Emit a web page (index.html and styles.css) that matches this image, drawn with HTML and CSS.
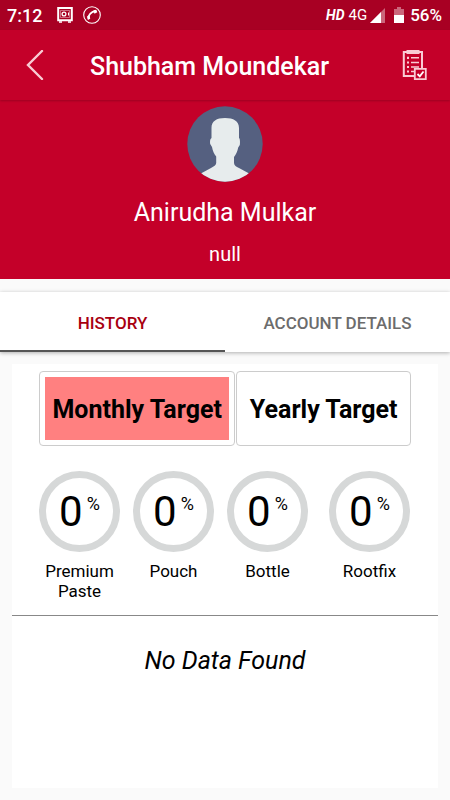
FILE: index.html
```html
<!DOCTYPE html>
<html lang="en">
<head>
<meta charset="utf-8">
<meta name="viewport" content="width=device-width, initial-scale=1">
<title>Shubham Moundekar</title>
<link rel="stylesheet" href="styles.css">
</head>
<body>
<div class="screen">
  <div class="status">
    <span class="clock">7:12</span>
    <svg class="status-safe" width="16" height="16" viewBox="0 0 16 16" fill="none" stroke="#fff">
      <path d="M1.200 1h13.600v12.200H1.200z" stroke-width="2"/>
      <path d="M3.500 3.500h9v7h-9z" stroke-width=".6" opacity=".7"/>
      <circle cx="7" cy="7" r="1.900" stroke-width="1.300"/>
      <path d="M11.500 5.500v3" stroke-width="1"/>
      <path d="M2 15h3M11 15h3" stroke-width="1.600"/>
    </svg>
    <svg class="status-call" width="18" height="18" viewBox="0 0 18 18">
      <circle cx="9" cy="9" r="8.300" fill="none" stroke="#fff" stroke-width="1.100"/>
      <path d="M5.500 12.500C5 9 8.500 5.300 12.500 5.400" fill="none" stroke="#fff" stroke-width="1.800"/>
      <path d="M10.300 4.200l3-.4 1 2.500-2.800 1.400zM4 10.300l2.700-.3.500 2.800-2.300 1.200z" fill="#fff"/>
    </svg>
    <span class="hd">HD</span>
    <span class="network">4G</span>
    <svg class="signal" width="15" height="15" viewBox="0 0 15 15">
      <path d="M0 15L15 0v15z" fill="#fff" opacity=".4"/>
      <path d="M0 15L11 4v11z" fill="#fff"/>
    </svg>
    <svg class="battery" width="10" height="16" viewBox="0 0 10 16">
      <path d="M3 0h4v2h3v6H0V2h3z" fill="#fff" opacity=".4"/>
      <path d="M0 8h10v8H0z" fill="#fff"/>
    </svg>
    <span class="percent">56%</span>
  </div>
  <header class="appbar">
    <button class="icon-button" type="button" aria-label="Back">
      <svg width="18" height="30" viewBox="0 0 18 30" fill="none" stroke="#f9cbd4" stroke-width="2.400" stroke-linecap="round"><path d="M16 1L2 15l14 14"/></svg>
    </button>
    <h1 class="title">Shubham Moundekar</h1>
    <button class="icon-button" type="button" aria-label="Orders">
      <svg width="25" height="30" viewBox="0 0 25 30" fill="none" stroke="#f9cbd4">
        <path d="M12 26H1.800V2H20v16" stroke-width="2"/>
        <path d="M4.500 2h13" stroke-width="4"/>
        <path d="M9 7.800h8M9 12.500h8M9 17h8M9 21.500h3" stroke-width="1.400"/>
        <path d="M5 7.800h2M5 12.500h2M5 17h2M5 21.500h2" stroke-width="2.200"/>
        <path d="M12.800 18.800h11v10.400h-11z" fill="#c40029" stroke-width="1.800"/>
        <path d="M15.500 24l2.300 2.300 3.700-4.800" stroke="#fff" stroke-width="1.800"/>
      </svg>
    </button>
  </header>
  <section class="profile">
    <svg class="avatar" width="76" height="76" viewBox="0 0 76 76" role="img" aria-label="Profile picture">
      <clipPath id="disc"><circle cx="38" cy="38" r="37.700"/></clipPath>
      <g clip-path="url(#disc)">
        <path d="M0 0h76v76H0z" fill="#556080"/>
        <path d="M24.500 32v-10c0-7 5-10 13.500-10s14 3 14 10v10c1.300 1 1 5 .8 7l-1.600 2.500c-.7 4-2.200 7-4.200 9.500v6c.3 2.500 2 3.500 5 5l12 6.500V80H12V68.500L24 62c3-1.500 5-3 5.200-5v-6.500c-2.200-2.500-3.500-5.500-4.200-9.500L23.200 38c-.4-2.500-.2-5 1.300-6z" fill="#e7eced"/>
      </g>
    </svg>
    <h2 class="name">Anirudha Mulkar</h2>
    <p class="role">null</p>
  </section>
  <nav class="tabs">
    <button class="tab tab-active" type="button">HISTORY</button>
    <button class="tab" type="button">ACCOUNT DETAILS</button>
  </nav>
  <main class="card">
    <div class="periods">
      <button class="period period-active" type="button"><span class="period-label">Monthly Target</span></button>
      <button class="period" type="button"><span class="period-label">Yearly Target</span></button>
    </div>
    <div class="meters">
      <div class="meter"><div class="ring"><span class="value">0</span><span class="unit">%</span></div><p class="label">Premium Paste</p></div>
      <div class="meter"><div class="ring"><span class="value">0</span><span class="unit">%</span></div><p class="label">Pouch</p></div>
      <div class="meter"><div class="ring"><span class="value">0</span><span class="unit">%</span></div><p class="label">Bottle</p></div>
      <div class="meter"><div class="ring"><span class="value">0</span><span class="unit">%</span></div><p class="label">Rootfix</p></div>
    </div>
    <p class="empty">No Data Found</p>
  </main>
</div>
</body>
</html>
```
FILE: styles.css
```css
* { box-sizing: border-box; }
body { margin: 0; background: #fafafa; color: #000; font-family: Roboto, "Liberation Sans", sans-serif; }
h1, h2, p { margin: 0; }
button { margin: 0; padding: 0; border: 0; background: none; font: inherit; color: inherit; }
svg { display: block; flex: none; }

.screen { display: flex; flex-direction: column; min-height: 100vh; }

.status { display: flex; align-items: center; height: 30px; padding: 0 8px 0 7px; background: #a80023; color: #fff; font-size: 18px; }
.clock, .percent { font-weight: 500; }
.percent { font-size: 17px; }
.status-safe { margin-left: 15px; }
.status-call { margin-left: 10px; }
.hd { margin-left: auto; font-size: 14px; font-weight: 700; font-style: italic; }
.network { margin: 0 3px 0 4px; font-size: 15px; }
.battery { margin: 0 6px 0 9px; }

.appbar { display: flex; align-items: center; height: 70px; padding: 0 23px 0 26px; background: #c40029; color: #fff; box-shadow: 0 1px 2px rgba(0, 0, 0, .2); z-index: 1; }
.title { flex: 1; margin-left: 46px; padding-top: 3px; font-size: 25px; line-height: 32px; font-weight: 500; }

.profile { display: flex; flex-direction: column; align-items: center; height: 179px; padding-top: 6px; background: #c40029; color: #fff; }
.name { margin-top: 15px; font-size: 25px; line-height: 32px; font-weight: 400; }
.role { margin-top: 13px; font-size: 20px; line-height: 24px; }

.tabs { display: grid; grid-template-columns: 1fr 1fr; height: 60px; margin-top: 13px; background: #fff; box-shadow: 0 1px 4px rgba(0, 0, 0, .3); }
.tab { padding-top: 3px; border-bottom: 2px solid transparent; color: #6c6c6c; font-size: 17px; font-weight: 500; }
.tab-active { border-color: #555; color: #a80010; }

.card { flex: 1; margin: 12px; padding-top: 7px; background: #fff; }
.periods { display: flex; gap: 1px; padding: 0 27px; }
.period { flex: 1 1 auto; height: 75px; padding: 5px; border: 1px solid #ccc; border-radius: 4px; font-size: 25px; font-weight: 700; }
.period-label { display: flex; align-items: center; justify-content: center; height: 63px; padding: 2px 7px 0; white-space: nowrap; }
.period-active .period-label { background: #ff8080; }

.meters { display: flex; gap: 13px; height: 170px; padding: 25px 28px 0 27px; border-bottom: 1px solid #888; }
.meter { width: 81px; text-align: center; }
.meter:last-child { margin-left: auto; }
.ring { display: flex; justify-content: center; gap: 4px; height: 81px; border: 7px solid #d6d8d8; border-radius: 50%; }
.value { font-size: 42px; line-height: 68px; }
.unit { padding-top: 14px; font-size: 18px; line-height: 24px; }
.label { margin-top: 9px; font-size: 17px; line-height: 20px; }
.empty { padding-top: 29px; text-align: center; font-size: 25px; line-height: 32px; font-style: italic; }
```
